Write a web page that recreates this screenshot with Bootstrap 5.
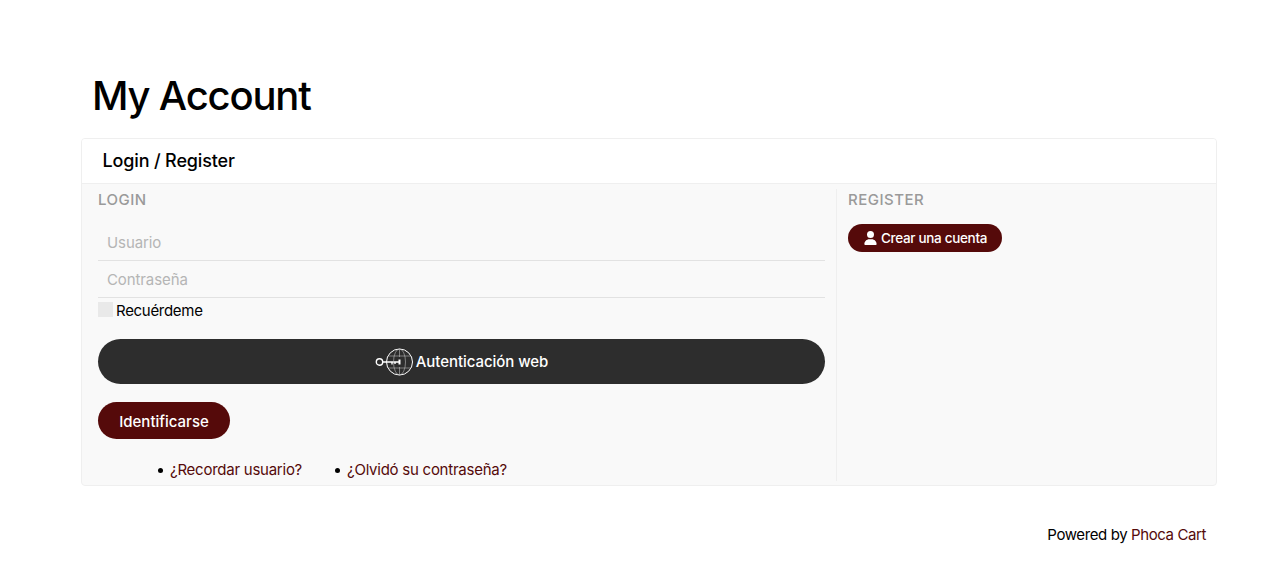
<!DOCTYPE html>
<html lang="es">
<head>
    <meta charset="UTF-8">
    <meta name="viewport" content="width=device-width, initial-scale=1.0">
    <title>My Account</title>
    <link href="https://cdn.jsdelivr.net/npm/bootstrap@5.3.0/dist/css/bootstrap.min.css" rel="stylesheet">
    <style>
        body {
            font-family: Inter, "Open Sans", sans-serif;
            font-size: 15px;
            letter-spacing: -0.3px;
            color: #000;
            background: #fff;
        }
        a { color: #550a0a; text-decoration: none; }
        .page-wrap { width: 1136px; margin-left: 81px; padding-top: 69px; }
        .page-title { font-size: 40px; font-weight: 500; line-height: 54px; margin: 0 0 15px 11px; letter-spacing: -1.2px; }
        .account-card { border: 1px solid #efefef; border-radius: 4px; height: 348px; overflow: hidden; background: #f9f9f9; }
        .account-head { background: #fff; height: 45px; border-bottom: 1px solid #efefef; padding-left: 20.5px; font-size: 18px; font-weight: 500; line-height: 44px; letter-spacing: -0.15px; }
        .account-cols { padding: 5px 12px 0 16px; height: 302px; }
        .login-col { width: 739px; padding-right: 11px; border-right: 1px solid #efefef; height: 292px; flex: none; }
        .register-col { padding-left: 11px; }
        .col-label { font-size: 15px; font-weight: 500; color: #9a9a9a; line-height: 21px; letter-spacing: 0.5px; margin: 0 0 14px; }
        .line-input { display: block; width: 100%; height: 37px; border: 0; border-bottom: 1px solid #e2e2e2; border-radius: 0; background: transparent; padding: 0 9px; font: inherit; font-size: 15px; letter-spacing: -0.1px; outline: 0; }
        .line-input::placeholder { color: #b5b5b5; }
        .remember-row { height: 24px; margin-top: 1px; line-height: 23px; }
        .remember-box { width: 15px; height: 15px; background: #e9e9e9; margin-right: 3px; margin-top: 3px; flex: none; }
        .webauth-btn { width: 100%; height: 45px; margin-top: 16px; background: #2d2d2d; color: #fff; border: 0; border-radius: 23px; font-weight: 500; font-size: 15px; letter-spacing: -0.05px; gap: 3px; }
        .webauth-btn span { padding-top: 2px; }
        .webauth-btn:hover { background: #2d2d2d; color: #fff; }
        .login-btn { display: block; height: 37px; width: 132px; margin-top: 18px; padding: 3px 0 0; background: #550a0a; color: #fff; border: 0; border-radius: 19px; font-weight: 500; font-size: 15px; letter-spacing: 0; }
        .login-btn:hover, .signup-btn:hover { background: #550a0a; color: #fff; }
        .login-links { list-style: none; margin: 19px 0 0; padding: 0 0 0 72px; height: 20px; line-height: 24px; letter-spacing: -0.25px; }
        .login-links li { width: 177px; }
        .login-links li::before { content: ""; display: inline-block; width: 5px; height: 5px; border-radius: 50%; background: #000; margin: 0 7px 2px -12px; }
        .signup-btn { height: 28px; width: 154px; padding: 0 0 0 16px; background: #550a0a; color: #fff; border: 0; border-radius: 14px; font-size: 13.5px; font-weight: 500; letter-spacing: -0.32px; gap: 4px; }
        .powered { text-align: right; padding: 37px 11px 0 0; line-height: 24px; letter-spacing: -0.4px; }
    </style>
</head>
<body>
    <div class="page-wrap">
        <h1 class="page-title">My Account</h1>
        <div class="account-card">
            <div class="account-head">Login / Register</div>
            <div class="account-cols d-flex">
                <div class="login-col">
                    <div class="col-label">LOGIN</div>
                    <input class="line-input form-control" type="text" placeholder="Usuario">
                    <input class="line-input form-control" type="password" placeholder="Contraseña">
                    <div class="remember-row d-flex">
                        <span class="remember-box"></span>
                        <span>Recuérdeme</span>
                    </div>
                    <button class="webauth-btn btn d-flex align-items-center justify-content-center" type="button">
                        <svg width="38" height="28" viewBox="0 0 38 28" fill="none" stroke="#fff" stroke-width="1">
                            <circle cx="4.500" cy="14" r="3.200" stroke-width="1.400"/>
                            <path d="M8 14h16M17 14v2.500M20 14v2" stroke-width="1.400"/>
                            <circle cx="24.500" cy="14" r="13"/>
                            <ellipse cx="24.500" cy="14" rx="6" ry="13" stroke-width=".6" stroke="#bbb"/>
                            <path d="M24.500 1v8M24.500 19v8M13 8h23M13 20h23" stroke-width=".6" stroke="#bbb"/>
                            <path d="M24.500 11.500v5" stroke-width="2"/>
                        </svg>
                        <span>Autenticación web</span>
                    </button>
                    <button class="login-btn btn" type="button">Identificarse</button>
                    <ul class="login-links d-flex">
                        <li><a href="#">¿Recordar usuario?</a></li>
                        <li><a href="#">¿Olvidó su contraseña?</a></li>
                    </ul>
                </div>
                <div class="register-col">
                    <div class="col-label">REGISTER</div>
                    <button class="signup-btn btn d-inline-flex align-items-center" type="button">
                        <svg width="13" height="14" viewBox="0 0 448 512" fill="#fff"><path d="M224 256a128 128 0 1 0 0-256 128 128 0 0 0 0 256zm-45.700 48C79.800 304 0 383.800 0 482.300 0 498.700 13.300 512 29.700 512h388.600c16.400 0 29.700-13.300 29.700-29.700C448 383.800 368.200 304 269.700 304z"/></svg>
                        <span>Crear una cuenta</span>
                    </button>
                </div>
            </div>
        </div>
        <div class="powered">Powered by <a href="#">Phoca Cart</a></div>
    </div>
    <script src="https://cdn.jsdelivr.net/npm/bootstrap@5.3.0/dist/js/bootstrap.bundle.min.js"></script>
</body>
</html>
